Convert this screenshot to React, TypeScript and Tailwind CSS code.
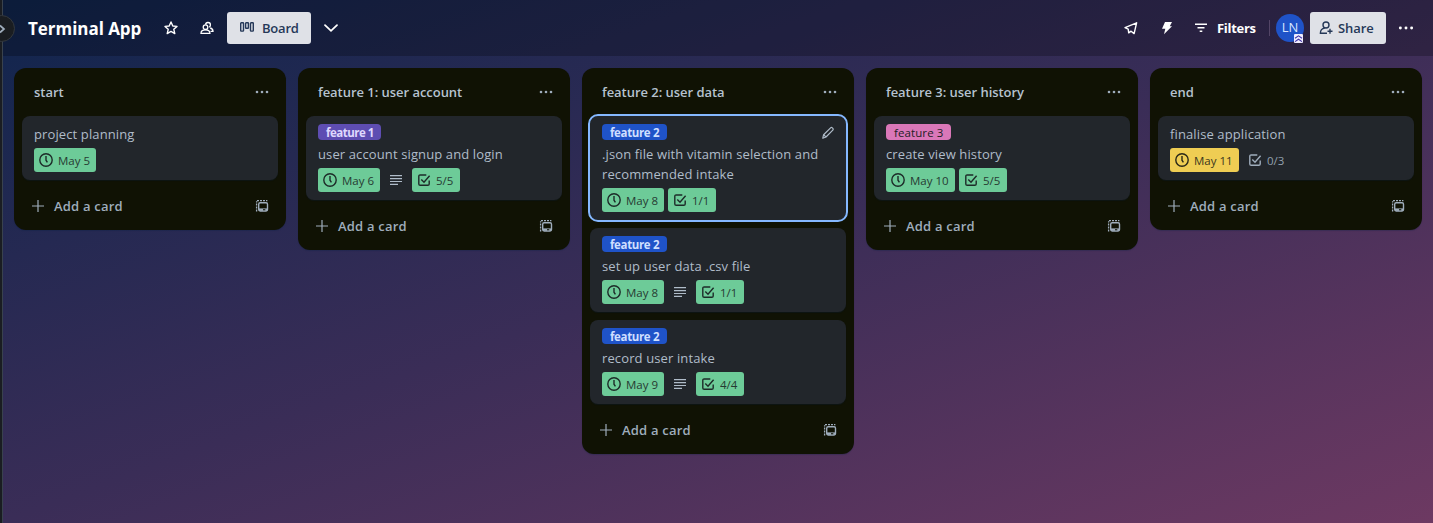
import React from 'react';

type Tone = 'green' | 'yellow' | 'plain';
type CardData = {
  title: string;
  label?: string;
  labelClass?: string;
  due?: string;
  dueTone?: Tone;
  desc?: boolean;
  check?: string;
  checkTone?: Tone;
  selected?: boolean;
};
type ListData = { name: string; cards: CardData[] };

const BLUE = 'w-[65px] bg-[#1f53c8] text-[#cfdfff] font-bold tracking-[-0.35px]';

const lists: ListData[] = [
  { name: 'start', cards: [{ title: 'project planning', due: 'May 5' }] },
  {
    name: 'feature 1: user account',
    cards: [
      {
        title: 'user account signup and login',
        label: 'feature 1',
        labelClass: 'w-[63px] bg-[#5e4db2] text-[#dfd8fd] font-bold tracking-[-0.5px]',
        due: 'May 6',
        desc: true,
        check: '5/5',
      },
    ],
  },
  {
    name: 'feature 2: user data',
    cards: [
      {
        title: '.json file with vitamin selection and recommended intake',
        label: 'feature 2',
        labelClass: BLUE,
        due: 'May 8',
        check: '1/1',
        selected: true,
      },
      { title: 'set up user data .csv file', label: 'feature 2', labelClass: BLUE, due: 'May 8', desc: true, check: '1/1' },
      { title: 'record user intake', label: 'feature 2', labelClass: BLUE, due: 'May 9', desc: true, check: '4/4' },
    ],
  },
  {
    name: 'feature 3: user history',
    cards: [
      {
        title: 'create view history',
        label: 'feature 3',
        labelClass: 'w-[65px] bg-[#da77b8] text-[#1d2125] font-medium tracking-[0.1px]',
        due: 'May 10',
        check: '5/5',
      },
    ],
  },
  {
    name: 'end',
    cards: [{ title: 'finalise application', due: 'May 11', dueTone: 'yellow', check: '0/3', checkTone: 'plain' }],
  },
];

const tones: Record<Tone, string> = {
  green: 'bg-[#6dcb98] text-[#1d2b28]',
  yellow: 'bg-[#efcd53] text-[#2a2818]',
  plain: 'text-[#9fadbc]',
};

function Dots({ className }: { className: string }) {
  return (
    <svg viewBox="0 0 16 16" className={className} fill="currentColor">
      <circle cx="3" cy="8" r="1.3" />
      <circle cx="8" cy="8" r="1.3" />
      <circle cx="13" cy="8" r="1.3" />
    </svg>
  );
}

function Clock() {
  return (
    <svg viewBox="0 0 16 16" className="size-4 shrink-0" fill="none" stroke="currentColor" strokeWidth="1.4">
      <circle cx="8" cy="8" r="6.2" />
      <path d="M8 4v4.2l1.4 2.2" />
    </svg>
  );
}

function Check() {
  return (
    <svg viewBox="0 0 16 16" className="size-4 shrink-0" fill="none" stroke="currentColor" strokeWidth="1.4">
      <path d="M10.3 3H4.2C3.3 3 2.8 3.5 2.8 4.3v7.6c0 .8.5 1.3 1.4 1.3h7.6c.9 0 1.4-.5 1.4-1.3V8.4" />
      <path d="M5.3 7.6 8 10.2l5.6-6.4" />
    </svg>
  );
}

function Description() {
  return (
    <svg viewBox="0 0 16 16" className="size-4" fill="none" stroke="currentColor" strokeWidth="1.2">
      <path d="M2 3.6h12M2 6.6h12M2 9.5h12M2 12.4h8" />
    </svg>
  );
}

function Pencil() {
  return (
    <svg viewBox="0 0 16 16" className="size-4" fill="none" stroke="currentColor" strokeWidth="1.2" strokeLinejoin="round">
      <path d="M3.6 9.7 10.6 2.9c.5-.5 1.2-.5 1.7 0l.5.5c.5.5.5 1.2 0 1.7L6 12l-3.2 1.2z" />
      <path d="m3.7 9.8 2.2 2.1" />
    </svg>
  );
}

function Template() {
  return (
    <svg viewBox="0 0 16 16" className="size-4" fill="none" stroke="currentColor">
      <path d="M2.6 13.4V3.2M3 2.6h10.4" strokeWidth="1.3" strokeDasharray="2 1" />
      <rect x="4.7" y="4.8" width="8.8" height="8.2" rx="1.4" strokeWidth="1.4" />
      <path d="M5 11.6h8.4" strokeWidth="2.4" />
      <path d="M9 11.2h2.3v1.1H9z" fill="#101204" stroke="none" />
    </svg>
  );
}

function Card({ card }: { card: CardData }) {
  return (
    <article
      className={`flex flex-col rounded-lg bg-[#22262b] px-3 pt-2 pb-2 text-[#b0bcc9] shadow-[0_1px_1px_#091e4240] ${
        card.selected ? 'outline-2 outline-[#85b8ff]' : ''
      }`}
    >
      {card.label && (
        <div className="mb-1 flex h-4 items-center justify-between">
          <span className={`h-4 rounded pl-2 text-[11.5px] leading-[17px] whitespace-nowrap ${card.labelClass}`}>{card.label}</span>
          {card.selected && (
            <span className="-mr-0.5 pt-0.5">
              <Pencil />
            </span>
          )}
        </div>
      )}
      <h3 className="-mr-2 text-[13px] leading-5 tracking-[0.12px]">{card.title}</h3>
      <div className="mt-1 flex h-6 items-center gap-1">
        <span
          className={`flex h-6 items-center gap-1 rounded-[3px] pl-1 ${card.due && card.due.length > 5 ? 'w-[69px]' : 'w-[62px]'} ${
            tones[card.dueTone ?? 'green']
          }`}
        >
          <Clock />
          <span className="pt-0.5 text-[11.5px] leading-5 whitespace-nowrap opacity-90">{card.due}</span>
        </span>
        {card.desc && (
          <span className="flex w-6 justify-center">
            <Description />
          </span>
        )}
        {card.check && (
          <span className={`flex h-6 w-12 items-center gap-1 rounded-[3px] pl-1 ${tones[card.checkTone ?? 'green']}`}>
            <Check />
            <span className="pt-0.5 text-[11.5px] leading-5 opacity-90">{card.check}</span>
          </span>
        )}
      </div>
    </article>
  );
}

function List({ list }: { list: ListData }) {
  return (
    <section className="flex w-[272px] shrink-0 flex-col rounded-xl bg-[#101204] px-2 pt-2 pb-2 text-[#9fadbc] shadow-[0_1px_1px_#091e4240]">
      <header className="flex h-10 items-start justify-between pl-3">
        <h2 className="pt-1.5 text-[13px] leading-5 font-semibold tracking-[-0.04px] text-[#b6c2cf]">{list.name}</h2>
        <span className="flex size-8 items-center justify-center">
          <Dots className="size-4" />
        </span>
      </header>
      <div className="flex flex-col gap-2">
        {list.cards.map((c) => (
          <Card key={c.title} card={c} />
        ))}
      </div>
      <footer className="mt-2.5 flex h-8 items-center justify-between pr-2 pl-2">
        <span className="flex items-center gap-2">
          <svg viewBox="0 0 16 16" className="size-4" fill="none" stroke="currentColor" strokeWidth="1.2">
            <path d="M8 2v12M2 8h12" />
          </svg>
          <span className="text-[13px] leading-5 font-semibold tracking-[0.2px]">Add a card</span>
        </span>
        <Template />
      </footer>
    </section>
  );
}

export default function App() {
  return (
    <div className="flex h-[523px] w-[1433px] overflow-hidden bg-[#1d2125] font-['Open_Sans','Noto_Sans',sans-serif]">
      <div className="relative w-[3px] shrink-0 border-r border-[#39424d] bg-[#1a1d22]">
        <span className="absolute top-[15px] -left-[12px] flex size-[27px] items-center justify-end rounded-full border border-[#33383e] bg-[#1a1d21] pr-2 text-[#9fadbc]">
          <svg viewBox="0 0 8 10" className="h-2.5 w-2" fill="none" stroke="currentColor" strokeWidth="1.7">
            <path d="m2 1.5 4 3.5-4 3.5" />
          </svg>
        </span>
      </div>
      <main className="flex min-w-0 flex-1 flex-col bg-[linear-gradient(160deg,#10254d_0%,#3a2d57_50%,#6d3962_100%)]">
        <header className="flex h-14 shrink-0 items-center bg-[#0000003d] pr-[18px] pl-[25px] text-white">
          <h1 className="w-[130px] pt-0.5 text-[17px] leading-6 font-bold tracking-[-0.04px] whitespace-nowrap">Terminal App</h1>
          <svg viewBox="0 0 16 16" className="ml-[5px] size-4" fill="none" stroke="currentColor" strokeWidth="1.4" strokeLinejoin="round">
            <path d="m8 2 1.8 4 4.2.4-3.2 2.9 1 4.3L8 11.4l-3.8 2.2 1-4.3L2 6.4 6.2 6z" />
          </svg>
          <svg viewBox="0 0 16 16" className="ml-5 size-4" fill="none" stroke="currentColor" strokeWidth="1.3">
            <circle cx="6.5" cy="7.2" r="2.3" />
            <path d="M2 13.3c0-2.4 1.9-3.5 4.5-3.5s4.4 1.1 4.4 3.5zM6.6 4.6c.2-3 4.9-2.7 4.8.3 0 1.1-.5 1.8-1.2 2.2M11.2 8c1.8.5 2.8 1.6 2.8 3.3h-2.4" />
          </svg>
          <button className="ml-3 flex h-8 w-[84px] items-center gap-[7px] rounded-[3px] bg-[#dfe1e7] pl-3 text-[#253858]">
            <svg viewBox="0 0 16 16" className="size-4" fill="none" stroke="currentColor" strokeWidth="1.4">
              <rect x="1.7" y="2.7" width="2.8" height="8.4" rx=".6" />
              <rect x="6.6" y="2.7" width="2.8" height="5.6" rx=".6" />
              <rect x="11.5" y="2.7" width="2.8" height="8.4" rx=".6" />
            </svg>
            <span className="text-[13px] leading-5 font-semibold tracking-[-0.2px]">Board</span>
          </button>
          <svg viewBox="0 0 16 16" className="ml-3 size-4" fill="none" stroke="currentColor" strokeWidth="1.8" strokeLinecap="round">
            <path d="m2 5.2 6 5.6 6-5.6" />
          </svg>
          <div className="ml-auto flex items-center">
            <svg viewBox="0 0 16 16" className="size-4" fill="none" stroke="currentColor" strokeWidth="1.4" strokeLinejoin="round">
              <path d="M13.6 2.8 2 7.6l3.2 1.6.5 3.6 2.4-1.6 3 2.4z" />
            </svg>
            <svg viewBox="0 0 16 16" className="ml-5 size-4" fill="currentColor">
              <path d="M6 2h7l-2.2 4.2H13L5 14.2l1.3-5.4H3z" />
            </svg>
            <svg viewBox="0 0 16 16" className="ml-[18px] size-4" fill="none" stroke="currentColor" strokeWidth="1.4">
              <path d="M2 4.2h12M4.5 7.8h7M6.7 11.2h2.6" />
            </svg>
            <span className="ml-2 w-10 text-[13px] leading-5 font-bold tracking-[-0.3px]">Filters</span>
            <span className="ml-3 h-4 w-px bg-[#534566]" />
            <span className="relative ml-1.5 flex size-7 items-center justify-center rounded-full bg-[#1f53c8] text-[13px] font-medium text-[#d8e5ff]">
              LN
              <span className="absolute right-px -bottom-px flex size-[9px] items-center justify-center rounded-[1px] bg-[#f0edff] text-[#4234a8]">
                <svg viewBox="0 0 9 9" className="size-[9px]" fill="none" stroke="currentColor" strokeWidth="1.1">
                  <path d="m1 4.2 3.5-2.4L8 4.2M1 7.6l3.5-2.4L8 7.6" />
                </svg>
              </span>
            </span>
            <button className="ml-1.5 flex h-8 w-[76px] items-center gap-1 rounded-[3px] bg-[#dfe1e7] pl-2 text-[#253858]">
              <svg viewBox="0 0 16 16" className="size-4" fill="none" stroke="currentColor" strokeWidth="1.4">
                <circle cx="8" cy="5" r="3" />
                <path d="M9 13.2H2.4c0-2.8 1.4-4.8 4.4-5.1M12 8.7v5M9.5 11.2h5" />
              </svg>
              <span className="text-[13px] leading-5 font-semibold tracking-[-0.1px]">Share</span>
            </button>
            <Dots className="ml-[11px] size-[18px]" />
          </div>
        </header>
        <div className="flex items-start gap-3 pt-3 pl-[11px]">
          {lists.map((l) => (
            <List key={l.name} list={l} />
          ))}
        </div>
      </main>
    </div>
  );
}
